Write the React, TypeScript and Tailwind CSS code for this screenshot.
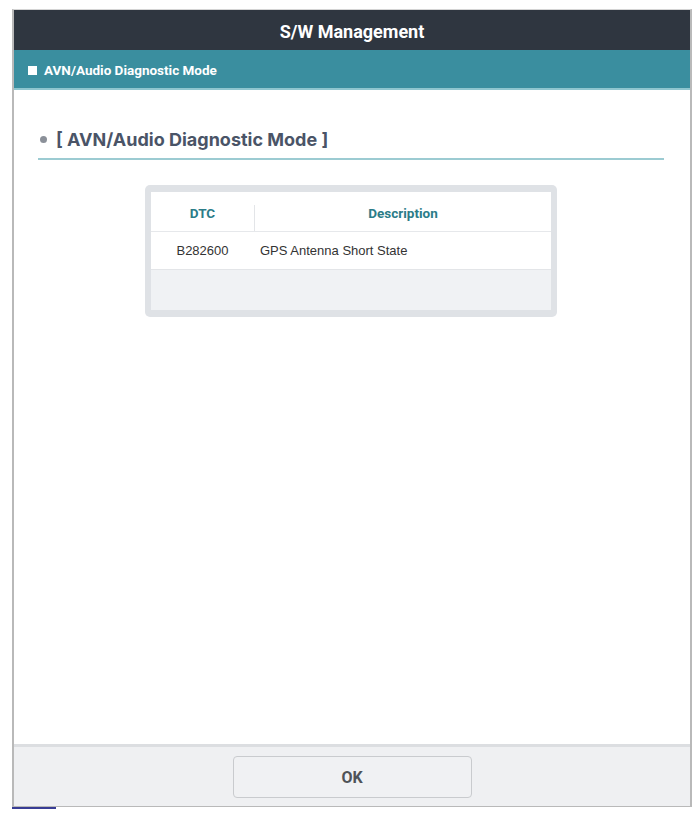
import React from 'react';

const rows = [{ code: 'B282600', desc: 'GPS Antenna Short State' }];

const App: React.FC = () => {
  return (
    <div className="h-[819px] w-[700px] bg-white pl-[12px] pt-[9px] font-['Roboto',sans-serif]">
      <div className="flex h-[798px] w-[680px] flex-col border-x-2 border-t border-b border-x-[#b9b9b9] border-t-[#d4d4d4] border-b-[#b9b9b9]">
        {/* title bar */}
        <div className="flex h-[40px] items-center justify-center bg-[#2f3640] pt-[3px]">
          <h1 className="text-[18px] font-bold text-white">S/W Management</h1>
        </div>
        <div className="flex h-[40px] items-center gap-[7px] border-b-2 border-[#8fc6cf] bg-[#3a8e9f] pl-[14px] pt-[3px]">
          <span className="h-[9px] w-[9px] bg-white" />
          <span className="text-[13.5px] font-bold text-white">AVN/Audio Diagnostic Mode</span>
        </div>

        <div className="flex flex-1 flex-col bg-white pl-[24px] pr-[26px] pt-[36px]">
          <div className="flex items-center gap-[9px] border-b-2 border-[#9ccbd2] pb-[5px] pl-[2px]">
            <span className="h-[7px] w-[7px] rounded-full bg-[#8b9099]" />
            <h2 className="font-['Inter',sans-serif] text-[18px] font-bold text-[#4a5467]">[ AVN/Audio Diagnostic Mode ]</h2>
          </div>

          <div className="mx-auto mt-[25px] w-[412px] rounded-[5px] bg-[#dfe2e6] px-[6px] py-[7px]">
            <div className="flex h-[40px] bg-white border-b border-[#e6e8eb]">
              <div className="flex w-[103px] items-center justify-center pt-[3px] text-[13.5px] font-bold text-[#2b7c88]">DTC</div>
              <div className="flex flex-1 items-end">
                <div className="flex h-[26px] flex-1 items-start justify-center border-l border-[#e3e5e8] text-[13.5px] font-bold text-[#2b7c88]">
                  <span className="-mt-[2px]">Description</span>
                </div>
              </div>
            </div>
            {rows.map(r => (
              <div key={r.code} className="flex h-[38px] items-center border-b border-[#e3e5e8] bg-white pt-[1px] font-['Liberation_Sans',Arial,sans-serif] text-[13px] text-[#333]">
                <div className="w-[103px] text-center">{r.code}</div>
                <div className="pl-[6px]">{r.desc}</div>
              </div>
            ))}
            <div className="h-[40px] bg-[#f0f2f4]" />
          </div>
        </div>

        {/* footer */}
        <div className="flex h-[62px] items-center justify-center border-t-[3px] border-[#dcdee1] bg-[#eff0f2]">
          <button className="h-[42px] w-[239px] rounded-[4px] border-[1.5px] border-[#c9cbce] bg-[#f0f1f3] pt-[2px] text-[16px] font-bold text-[#4f5358]">
            OK
          </button>
        </div>
      </div>
      <div className="h-[2px] w-[44px] bg-[#383c94]" />
    </div>
  );
};

export default App;
